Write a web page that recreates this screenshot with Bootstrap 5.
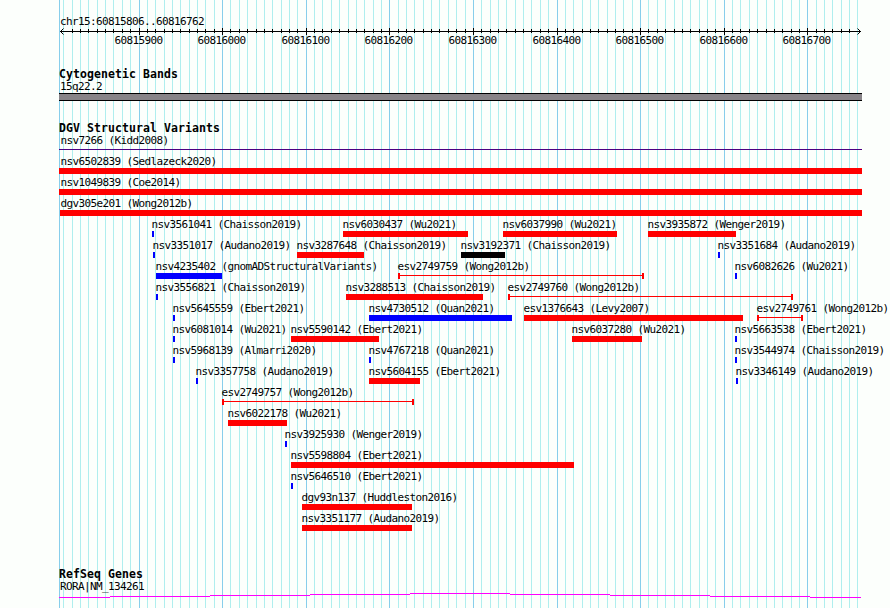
<!DOCTYPE html>
<html lang="en">
<head>
<meta charset="utf-8">
<title>chr15:60815806..60816762</title>
<link href="https://cdn.jsdelivr.net/npm/bootstrap@5.3.0/dist/css/bootstrap.min.css" rel="stylesheet">
<style>
body{background:#fcfffc;color:#000;font:11px/12px "DejaVu Sans Mono","Liberation Mono",monospace;letter-spacing:-.622px;width:890px;height:608px;overflow:hidden}
.browser{width:890px;height:608px}
.gridlines{inset:0;z-index:0}
.browser>section{z-index:1}
.label{white-space:pre;height:13px;line-height:12px;padding-top:1px}
h2.title{font-size:11.5px;line-height:12px;height:12px;font-weight:700;letter-spacing:.077px;margin:0 0 0 59px;white-space:pre}
.position{padding-top:15px;height:68px}
.position .label{margin-left:60px}
.cyto{height:54px}
.cyto .label,.genes .label{margin-left:60px}
.band{margin:0 28px 0 59px;height:8px;background:#888488;border:solid #000;border-width:1px 0}
.variants{height:446px}
.lane{height:21px}
.feature{top:0}
.feature .label{text-indent:-.6px}
.bar{height:6px}
.red{background:#f00}.blue{background:#00f}.black{background:#000}
.span-line{height:6px;border:solid #f00;border-width:0 2px;background:linear-gradient(#f00,#f00) 0 2px/100% 1px no-repeat}
.hair{height:1px;margin-top:2px;background:#4b0082}
</style>
</head>
<body>
<main class="browser position-relative overflow-hidden">
<svg class="gridlines position-absolute" width="890" height="608" shape-rendering="crispEdges" id="grid"></svg>
<section class="position position-relative">
<div class="label">chr15:60815806..60816762</div>
<svg class="d-block overflow-visible" width="890" height="30" viewBox="0 1 890 30" id="ruler"></svg>
</section>
<section class="cyto position-relative">
<h2 class="title">Cytogenetic Bands</h2>
<div class="label">15q22.2</div>
<div class="band"></div>
</section>
<section class="variants position-relative">
<h2 class="title">DGV Structural Variants</h2>
<div id="lanes"></div>
</section>
<section class="genes position-relative">
<h2 class="title">RefSeq Genes</h2>
<div class="label">RORA|NM_134261</div>
<svg class="d-block" width="890" height="15" shape-rendering="crispEdges"><path stroke="#f0f" fill="none" d="M59 4.5h51M110 3.5h100M210 2.5h100M310 1.5h100M410 .5h100M510 1.5h100M610 2.5h100M710 3.5h100M810 4.5h51"/></svg>
</section>
</main>
<script>
const tickX = k => Math.floor(139 + 8.36 * k);
let lines = '<rect x="59" width="1" height="608" fill="#87ceeb"/>';
let ticks = '<path d="M60 4.5h801M63.5 1.5l-3 3 3 3M857.5 1.5l3 3-3 3" stroke="#000" fill="none"/>';
for (let k = -9; k <= 86; k++) {
  const major = k % 10 === 0, x = tickX(k);
  lines += `<rect x="${x}" width="1" height="608" fill="${major ? '#87ceeb' : '#afeeee'}"/>`;
  if (k > -9 && k < 86) ticks += `<rect x="${x}" y="${major ? 1 : 2}" width="1" height="${major ? 7 : 4}" shape-rendering="crispEdges"/>`;
  if (major) ticks += `<text x="${x - 24.4}" y="17">${60815900 + k * 10}</text>`;
}
document.getElementById('grid').innerHTML = lines;
document.getElementById('ruler').innerHTML = ticks;

// Each feature: [left, width, kind, name, source]
const lanes = [
 [[59,803,'hair','nsv7266','Kidd2008']],
 [[59,803,'bar red','nsv6502839','Sedlazeck2020']],
 [[59,803,'bar red','nsv1049839','Coe2014']],
 [[60,802,'bar red','dgv305e201','Wong2012b']],
 [[152,2,'bar blue','nsv3561041','Chaisson2019'],[343,125,'bar red','nsv6030437','Wu2021'],[503,114,'bar red','nsv6037990','Wu2021'],[648,88,'bar red','nsv3935872','Wenger2019']],
 [[153,2,'bar blue','nsv3351017','Audano2019'],[297,67,'bar red','nsv3287648','Chaisson2019'],[461,44,'bar black','nsv3192371','Chaisson2019'],[718,2,'bar blue','nsv3351684','Audano2019']],
 [[156,66,'bar blue','nsv4235402','gnomADStructuralVariants'],[398,246,'span-line','esv2749759','Wong2012b'],[735,2,'bar blue','nsv6082626','Wu2021']],
 [[156,2,'bar blue','nsv3556821','Chaisson2019'],[346,137,'bar red','nsv3288513','Chaisson2019'],[508,285,'span-line','esv2749760','Wong2012b']],
 [[173,2,'bar blue','nsv5645559','Ebert2021'],[369,143,'bar blue','nsv4730512','Quan2021'],[524,219,'bar red','esv1376643','Levy2007'],[757,46,'span-line','esv2749761','Wong2012b']],
 [[173,2,'bar blue','nsv6081014','Wu2021'],[291,88,'bar red','nsv5590142','Ebert2021'],[572,70,'bar red','nsv6037280','Wu2021'],[735,2,'bar blue','nsv5663538','Ebert2021']],
 [[173,2,'bar blue','nsv5968139','Almarri2020'],[369,2,'bar blue','nsv4767218','Quan2021'],[735,2,'bar blue','nsv3544974','Chaisson2019']],
 [[196,2,'bar blue','nsv3357758','Audano2019'],[369,51,'bar red','nsv5604155','Ebert2021'],[736,2,'bar blue','nsv3346149','Audano2019']],
 [[222,192,'span-line','esv2749757','Wong2012b']],
 [[228,59,'bar red','nsv6022178','Wu2021']],
 [[285,2,'bar blue','nsv3925930','Wenger2019']],
 [[291,283,'bar red','nsv5598804','Ebert2021']],
 [[291,2,'bar blue','nsv5646510','Ebert2021']],
 [[302,110,'bar red','dgv93n137','Huddleston2016']],
 [[302,110,'bar red','nsv3351177','Audano2019']]
];
document.getElementById('lanes').innerHTML = lanes.map(l => '<div class="lane position-relative">' + l.map(([x, w, kind, name, src]) =>
  `<div class="feature position-absolute" style="left:${x}px"><div class="label" style="margin-left:${x < 61 ? 61 - x : 0}px">${name} (${src})</div><div class="${kind}" style="width:${w}px"></div></div>`).join('') + '</div>').join('');
</script>
<script src="https://cdn.jsdelivr.net/npm/bootstrap@5.3.0/dist/js/bootstrap.bundle.min.js"></script>
</body>
</html>
